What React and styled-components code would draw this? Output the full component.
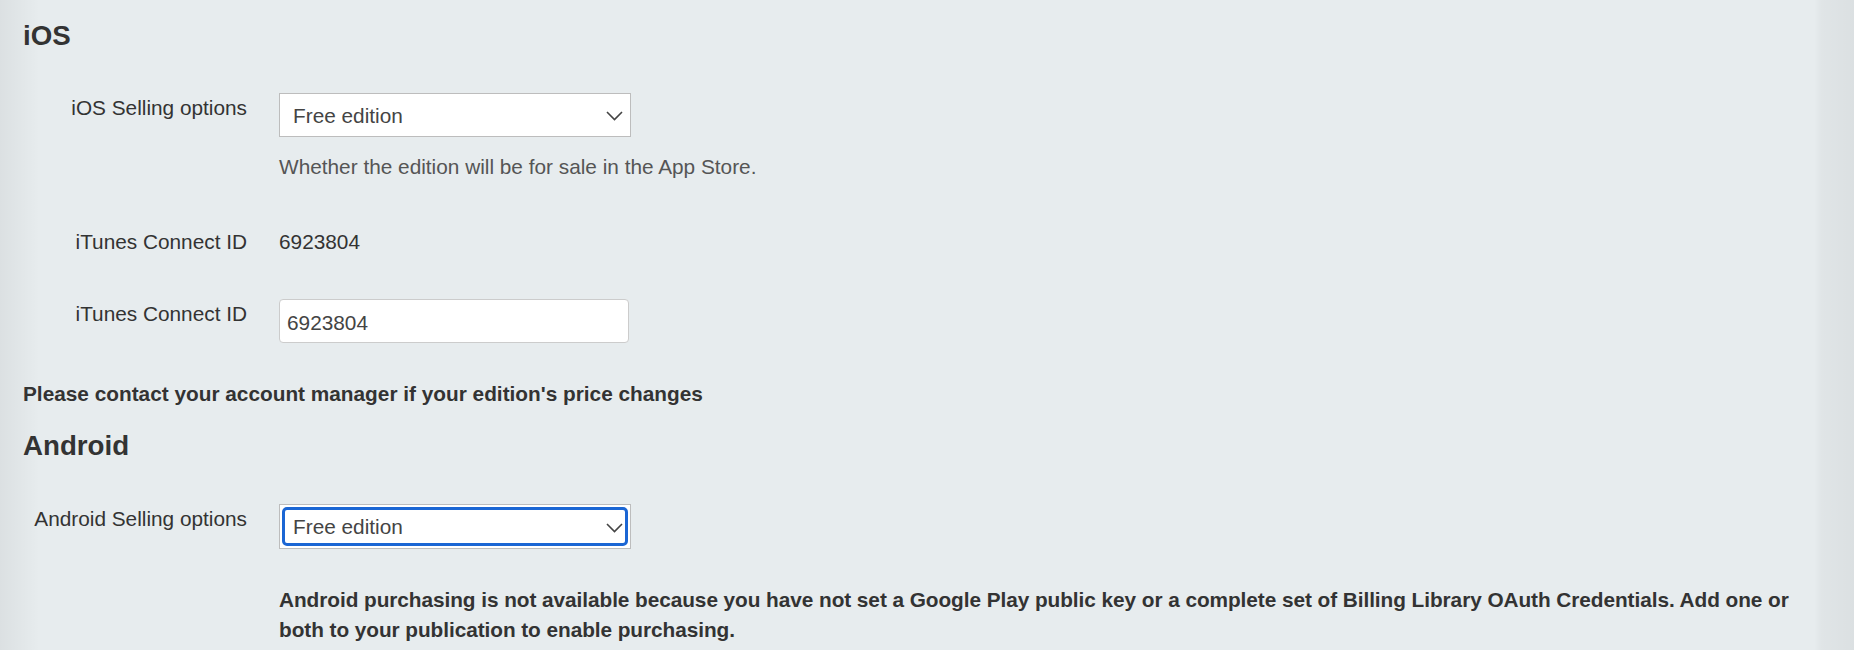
import styled, { createGlobalStyle } from "styled-components";

const GlobalStyle = createGlobalStyle`
  html, body {
    margin: 0;
    padding: 0;
  }
  body {
    background: #e7ecee;
    font-family: "Liberation Sans", Arial, Helvetica, sans-serif;
    font-size: 20.8px;
    line-height: 30px;
    color: #333;
  }
`;

const Page = styled.div`
  min-height: 650px;
  box-sizing: border-box;
  padding: 19px 34px 0 23px;
  background: linear-gradient(
    to right,
    rgba(0, 0, 0, 0.05) 0,
    rgba(0, 0, 0, 0) 40px,
    rgba(0, 0, 0, 0) calc(100% - 40px),
    rgba(0, 0, 0, 0.03) calc(100% - 32px),
    rgba(0, 0, 0, 0.05) 100%
  );
`;

const Heading = styled.h3`
  margin: ${(p) => p.$mt || 0}px 0 ${(p) => p.$mb || 40}px;
  font-size: 27.7px;
  line-height: 34px;
  font-weight: bold;
  color: #333;
`;

const Row = styled.div`
  display: grid;
  grid-template-columns: 224px 1fr;
  column-gap: 32px;
  align-items: start;
  margin-top: ${(p) => p.$mt || 0}px;
`;

const Label = styled.label`
  text-align: right;
  line-height: 30px;
  color: #333;
`;

const Field = styled.div`
  display: flex;
  flex-direction: column;
  align-items: flex-start;
`;

const SelectFrame = styled.div`
  position: relative;
  width: 352px;
  height: ${(p) => p.$height || 44}px;
  box-sizing: border-box;
  border: 1px solid #bdbdbd;
  background: #fff;
  padding: 2px;
`;

const Select = styled.select`
  appearance: none;
  -webkit-appearance: none;
  display: block;
  width: 100%;
  height: 100%;
  box-sizing: border-box;
  margin: 0;
  border: 3px solid ${(p) => (p.$focused ? "#1b66d4" : "transparent")};
  border-radius: 5px;
  background: transparent;
  padding: 0 36px 0 8px;
  font-family: inherit;
  font-size: 20.8px;
  color: #444;
  outline: none;
`;

const Chevron = styled.svg`
  position: absolute;
  right: 7px;
  top: calc(50% + 1px);
  transform: translateY(-50%);
  pointer-events: none;
`;

const TextInput = styled.input`
  width: 350px;
  height: 44px;
  box-sizing: border-box;
  margin: 0;
  border: 1px solid #cccccc;
  border-radius: 4px;
  background: #fff;
  padding: 3px 7px 0;
  font-family: inherit;
  font-size: 20.8px;
  color: #444;
  outline: none;
`;

const Help = styled.p`
  margin: 15px 0 0;
  color: #555;
`;

const StaticValue = styled.div`
  color: #333;
`;

const Notice = styled.p`
  margin: ${(p) => p.$mt || 0}px 0 0;
  font-weight: bold;
  color: #333;
`;

const Warning = styled.p`
  margin: 0;
  font-weight: bold;
  color: #333;
  line-height: 30px;
  letter-spacing: -0.06px;
`;

const EditionSelect = ({ focused, height }) => (
  <SelectFrame $height={height}>
    <Select $focused={focused} defaultValue="free">
      <option value="free">Free edition</option>
      <option value="paid">Paid edition</option>
    </Select>
    <Chevron width="17" height="10" viewBox="0 0 17 10">
      <path d="M1 1 L8.5 8.5 L16 1" fill="none" stroke="#444" strokeWidth="1.6" />
    </Chevron>
  </SelectFrame>
);

export default function App() {
  return (
    <>
      <GlobalStyle />
      <Page>
        <Heading>iOS</Heading>

        <Row>
          <Label>iOS Selling options</Label>
          <Field>
            <EditionSelect />
            <Help>Whether the edition will be for sale in the App Store.</Help>
          </Field>
        </Row>

        <Row $mt={45}>
          <Label>iTunes Connect ID</Label>
          <StaticValue>6923804</StaticValue>
        </Row>

        <Row $mt={42}>
          <Label>iTunes Connect ID</Label>
          <Field>
            <TextInput type="text" defaultValue="6923804" />
          </Field>
        </Row>

        <Notice $mt={36}>Please contact your account manager if your edition's price changes</Notice>

        <Heading $mt={20} $mb={41}>Android</Heading>

        <Row>
          <Label>Android Selling options</Label>
          <Field>
            <EditionSelect focused height={45} />
          </Field>
        </Row>

        <Row $mt={36}>
          <span />
          <Warning>
            Android purchasing is not available because you have not set a Google Play public key or a
            complete set of Billing Library OAuth Credentials. Add one or both to your publication to
            enable purchasing.
          </Warning>
        </Row>
      </Page>
    </>
  );
}
